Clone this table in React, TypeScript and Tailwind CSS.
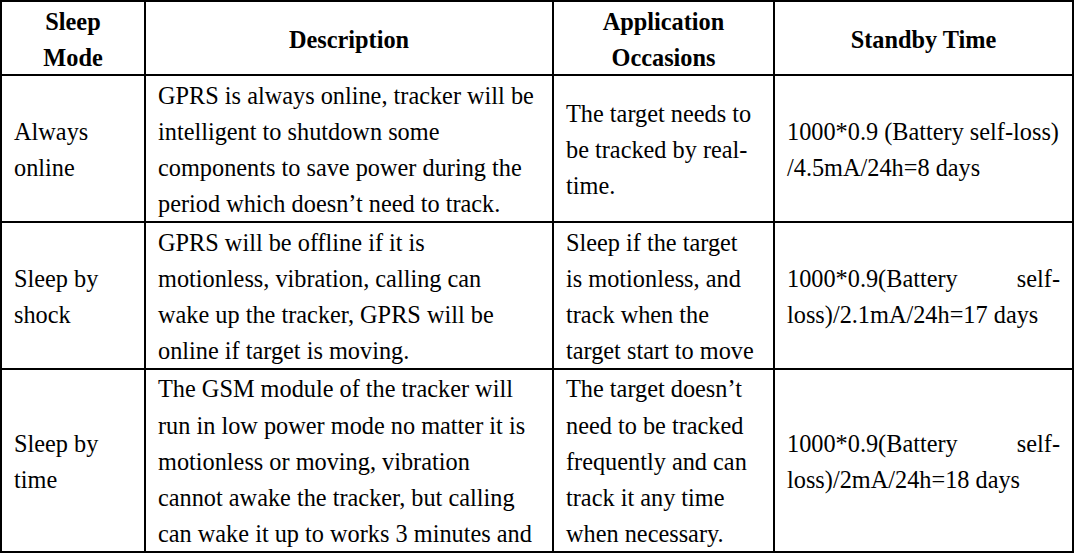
import { FC } from 'react';

type Cell = {
  lines: string[];
  // first line spread to both edges (justified text in the source)
  spread?: [string, string];
};

const header = [['Sleep', 'Mode'], ['Description'], ['Application', 'Occasions'], ['Standby Time']];

const rows: Cell[][] = [
  [
    { lines: ['Always', 'online'] },
    {
      lines: [
        'GPRS is always online, tracker will be',
        'intelligent to shutdown some',
        'components to save power during the',
        'period which doesn\u2019t need to track.',
      ],
    },
    { lines: ['The target needs to', 'be tracked by real-', 'time.'] },
    { lines: ['1000*0.9 (Battery self-loss)', '/4.5mA/24h=8 days'] },
  ],
  [
    { lines: ['Sleep by', 'shock'] },
    {
      lines: [
        'GPRS will be offline if it is',
        'motionless, vibration, calling can',
        'wake up the tracker, GPRS will be',
        'online if target is moving.',
      ],
    },
    { lines: ['Sleep if the target', 'is motionless, and', 'track when the', 'target start to move'] },
    { spread: ['1000*0.9(Battery', 'self-'], lines: ['loss)/2.1mA/24h=17 days'] },
  ],
  [
    { lines: ['Sleep by', 'time'] },
    {
      lines: [
        'The GSM module of the tracker will',
        'run in low power mode no matter it is',
        'motionless or moving, vibration',
        'cannot awake the tracker, but calling',
        'can wake it up to works 3 minutes and',
      ],
    },
    {
      lines: [
        'The target doesn\u2019t',
        'need to be tracked',
        'frequently and can',
        'track it any time',
        'when necessary.',
      ],
    },
    { spread: ['1000*0.9(Battery', 'self-'], lines: ['loss)/2mA/24h=18 days'] },
  ],
];

const BodyCell: FC<{ cell: Cell }> = ({ cell }) => (
  <div className="bg-white flex flex-col justify-center pl-3 pr-3 pt-[3px] whitespace-nowrap">
    {cell.spread && (
      <div className="flex justify-between">
        <span>{cell.spread[0]}</span>
        <span>{cell.spread[1]}</span>
      </div>
    )}
    {cell.lines.map((line, i) => (
      <div key={i}>{line}</div>
    ))}
  </div>
);

const App: FC = () => {
  return (
    <div className="bg-white min-h-screen">
      <div
        className="grid w-fit grid-cols-[142px_406px_219px_297px] grid-rows-[72px_145px_145px_181px] gap-[2px] bg-black p-[2px] text-[24.3px] leading-[36.25px] text-black"
        style={{ fontFamily: '"Liberation Serif", "Times New Roman", serif' }}
      >
        {header.map((h, i) => (
          <div key={i} className="bg-white flex flex-col items-center justify-center pt-[3px] font-bold leading-[36px]">
            {h.map((line) => (
              <div key={line}>{line}</div>
            ))}
          </div>
        ))}
        {rows.map((row, r) =>
          row.map((cell, c) => <BodyCell key={`${r}-${c}`} cell={cell} />)
        )}
      </div>
    </div>
  );
};

export default App;
